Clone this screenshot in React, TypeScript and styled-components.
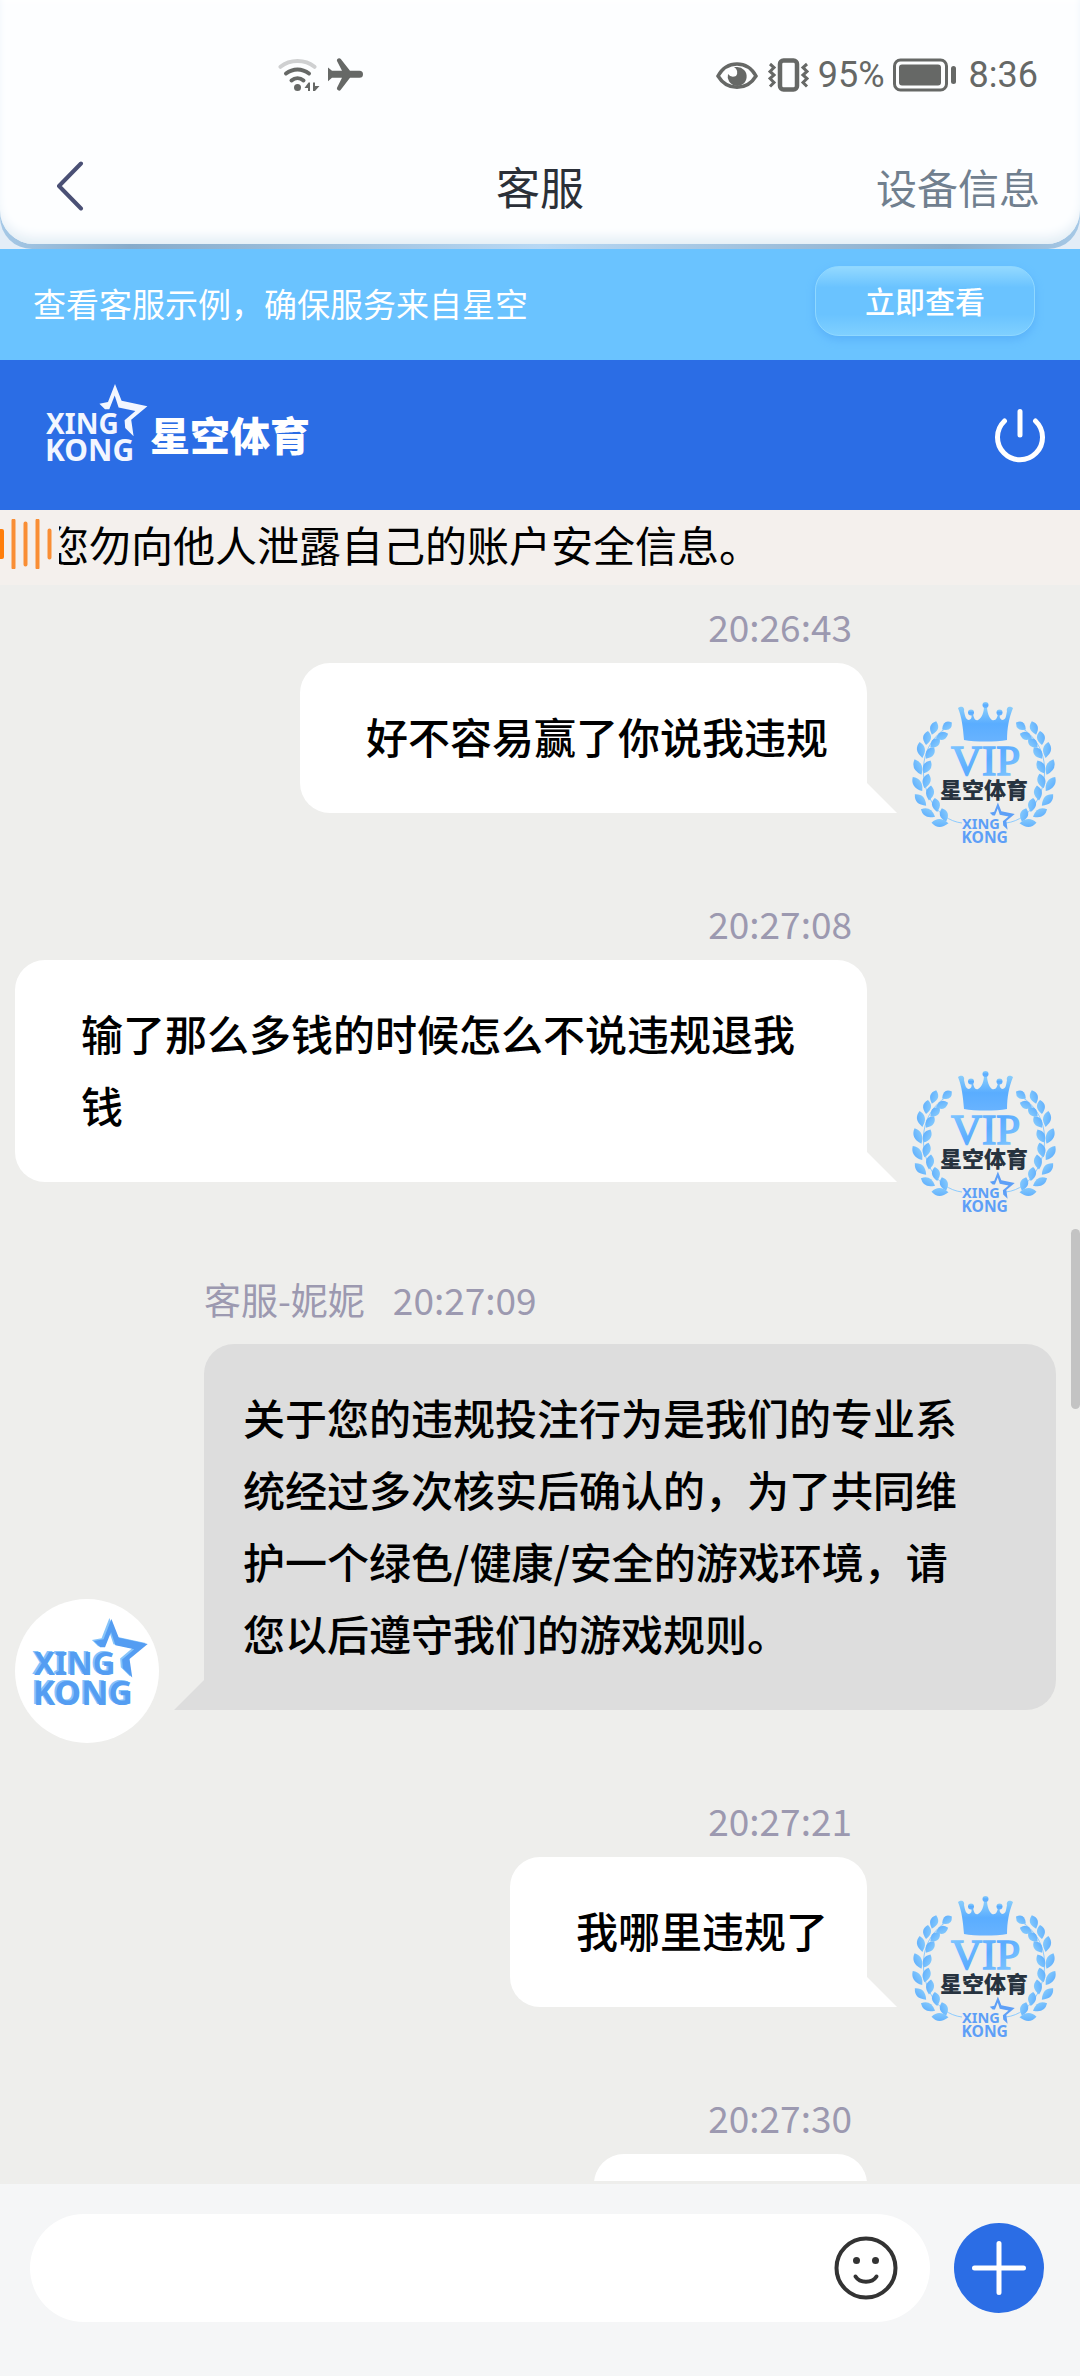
import React, { useState } from 'react';
import styled, { createGlobalStyle, css } from 'styled-components';

type Message = {
  id: number;
  from: 'user' | 'agent';
  name?: string;
  time: string;
  text: string;
};

const MESSAGES: Message[] = [
  { id: 1, from: 'user', time: '20:26:43', text: '好不容易赢了你说我违规' },
  { id: 2, from: 'user', time: '20:27:08', text: '输了那么多钱的时候怎么不说违规退我钱' },
  {
    id: 3,
    from: 'agent',
    name: '客服-妮妮',
    time: '20:27:09',
    text: '关于您的违规投注行为是我们的专业系统经过多次核实后确认的，为了共同维护一个绿色/健康/安全的游戏环境，请您以后遵守我们的游戏规则。',
  },
  { id: 4, from: 'user', time: '20:27:21', text: '我哪里违规了' },
  { id: 5, from: 'user', time: '20:27:30', text: '' },
];

// cx, cy, length, angle
const LEAVES = [
  [28, 121, 17, 2],
  [16, 111, 16, 28],
  [8.5, 98, 16, 45],
  [5.5, 82, 17, 56],
  [6, 65, 17, 66],
  [9, 48, 16, 80],
  [15, 36, 14, 98],
  [22, 26, 14, 108],
  [32, 113, 14, 72],
  [24, 103, 14, 80],
  [18, 91, 15, 98],
  [14.5, 79, 15, 106],
  [15, 65, 15, 118],
  [18, 51, 14, 126],
  [23, 41, 13, 136],
  [30, 34, 13, 160],
  [35, 24, 12, 144],
];

const STAR =
  'M70 0 76.6 16.8 102.4 22.3 86.2 35.7 88.6 52.2 80.2 44 79.6 36.2 90.4 27 73.6 23.5 69.7 11.6 64.3 25.2H60L54.4 19.7 63 18Z';

const BrandMark = ({ fill }: { fill: string }) => (
  <g fill={fill} fontFamily="'Noto Sans', sans-serif" fontWeight="700">
    <path d={STAR} />
    <text x="1" y="50" fontSize="28">
      XING
    </text>
    <text x="0" y="77" fontSize="30">
      KONG
    </text>
  </g>
);

const Laurel = () => (
  <>
    <path d="M50 121C24 118 8 88 12 60 14 46 22 34 34 26" fill="none" stroke="#8ccbff" strokeWidth="1" />
    {LEAVES.map(([x, y, size, angle]) => (
      <path
        key={`${x}-${y}`}
        transform={`translate(${x} ${y}) rotate(${angle})`}
        d={`M${-size / 2} 0Q-1 -8 ${size / 2} 0Q-1 8 ${-size / 2} 0Z`}
      />
    ))}
  </>
);

const VipAvatar = () => (
  <AvatarSvg viewBox="0 0 144 144" aria-hidden="true">
    <defs>
      <linearGradient id="leaf" x1="0" y1="0" x2="0" y2="1">
        <stop offset="0" stopColor="#82c8fd" />
        <stop offset="1" stopColor="#64b2fd" />
      </linearGradient>
      <linearGradient id="vip" x1="0" y1="0" x2="1" y2="1">
        <stop offset="0" stopColor="#86cbff" />
        <stop offset="0.5" stopColor="#5aabff" />
        <stop offset="1" stopColor="#8ccfff" />
      </linearGradient>
      <linearGradient id="crown" x1="0" y1="0" x2="0" y2="1">
        <stop offset="0" stopColor="#8ccffb" />
        <stop offset="0.5" stopColor="#5aadff" />
        <stop offset="1" stopColor="#68b3ff" />
      </linearGradient>
    </defs>
    <g fill="url(#leaf)">
      <Laurel />
      <g transform="translate(144 0) scale(-1 1)">
        <Laurel />
      </g>
    </g>
    <g fill="url(#crown)">
      <path d="M52 38C51 26 50 16 46 6 50 3 53 6 52 9 53 14 54 18 57 18 60 17 60 14 59 12H61C62 16 63 19 66 18 70 16 72 10 72 4H75C75 10 77 16 80 18 84 19 85 16 86 12H88C87 15 88 17 90 18 94 18 94 14 95 9 94 6 97 3 101 6 97 16 95 26 95 38 84 40 63 40 52 38Z" />
      <circle cx="73.500" cy="3" r="3" />
      <circle cx="59" cy="10.500" r="3" />
      <circle cx="87.500" cy="10.500" r="3" />
    </g>
    <text x="39" y="73" fontFamily="'Liberation Serif', serif" fontSize="43" fill="url(#vip)" stroke="url(#vip)" strokeWidth="1.500">
      VIP
    </text>
    <text x="28" y="96" fontFamily="'Noto Sans CJK SC', sans-serif" fontWeight="900" fontSize="22" fill="#27333f">
      星空体育
    </text>
    <g transform="translate(49.500 100.500) scale(0.520)">
      <BrandMark fill="#5d9ff7" />
    </g>
  </AvatarSvg>
);

const AgentAvatar = () => (
  <AvatarSvg viewBox="0 0 144 144" aria-hidden="true">
    <circle cx="72" cy="72" r="72" fill="#fff" />
    <g transform="translate(16 19) scale(1.120)">
      <BrandMark fill="#86c4fa" />
    </g>
    <g transform="translate(18 20) scale(1.120)">
      <BrandMark fill="#549df2" />
    </g>
  </AvatarSvg>
);

const App = () => {
  const [draft, setDraft] = useState('');

  return (
    <>
      <GlobalStyle />
      <Page>
        <HeaderShell>
          <HeaderRim>
            <HeaderCard>
              <StatusBar>
                <StatusGroup>
                  <svg width="42" height="34" viewBox="0 0 42 34" aria-hidden="true">
                    <g fill="none" strokeWidth="4" strokeLinecap="round">
                      <path d="M2.500 8.800C12 1 27 1 36.500 8.800" stroke="#cfd0d1" />
                      <path d="M8 15.500C15 10 24 10 31 15.500M13.500 22.500C17 19.500 22 19.500 25.500 22.500" stroke="#666866" />
                    </g>
                    <circle cx="19.500" cy="29.500" r="3.500" fill="#666866" />
                    <path d="M26.500 30 30.500 24.500H32V33H30V30ZM35 24.500H37V28H41.500L37 33H35Z" fill="#666866" />
                  </svg>
                  <svg width="36" height="34" viewBox="0 0 36 34" aria-hidden="true">
                    <path
                      d="M0 9.500 4 12.800H14L9 3A2.200 2.200 0 0 1 12.800 1L22 12.800H31.500A3.500 3.500 0 0 1 31.500 19.800H22L12.800 31.800A2.200 2.200 0 0 1 9 29.800L14 19.800H4L0 23.200Z"
                      fill="#666866"
                    />
                  </svg>
                </StatusGroup>
                <StatusGroup>
                  <svg width="42" height="34" viewBox="0 0 42 34" aria-hidden="true">
                    <path d="M2 18C11 2 31 2 40 18 31 33 11 33 2 18Z" fill="none" stroke="#666866" strokeWidth="3.500" />
                    <path d="M21 9A9.500 9.500 0 1 1 12 16 6.500 6.500 0 0 0 20 18 6 6 0 0 0 18 9Z" fill="#666866" />
                  </svg>
                  <VibrateIcon viewBox="0 0 42 34" aria-hidden="true">
                    <g fill="none" stroke="#666866">
                      <rect x="12" y="2.500" width="17" height="29" rx="3.500" strokeWidth="4.500" />
                      <path
                        d="M2 6 6 9.500 2 13.500 6 17 2 20.500 6 24.500 2 28.500M39 6 35 9.500 39 13.500 35 17 39 20.500 35 24.500 39 28.500"
                        strokeWidth="3"
                      />
                    </g>
                  </VibrateIcon>
                  <span>95%</span>
                  <svg width="64" height="34" viewBox="0 0 64 34" aria-hidden="true">
                    <rect x="1.500" y="2" width="52" height="30" rx="6" fill="none" stroke="#666866" strokeWidth="3" />
                    <rect x="6" y="6.500" width="42" height="21" rx="3" fill="#666866" />
                    <rect x="58" y="8" width="5" height="18" rx="2.500" fill="#666866" />
                  </svg>
                  <Clock>8:36</Clock>
                </StatusGroup>
              </StatusBar>
              <NavBar>
                <BackButton aria-label="返回">
                  <svg width="28" height="50" viewBox="0 0 28 50" aria-hidden="true">
                    <path d="M25 2.500 3 25 25 47.500" fill="none" stroke="#4a5075" strokeWidth="4" strokeLinecap="round" strokeLinejoin="round" />
                  </svg>
                </BackButton>
                <Title>客服</Title>
                <DeviceLink href="#device">设备信息</DeviceLink>
              </NavBar>
            </HeaderCard>
          </HeaderRim>
        </HeaderShell>

        <Banner>
          <span>查看客服示例，确保服务来自星空</span>
          <BannerButton>立即查看</BannerButton>
        </Banner>

        <BrandBar>
          <BrandLogo viewBox="0 0 280 90" role="img" aria-label="星空体育">
            <BrandMark fill="#f2f6ff" />
            <text x="105" y="67" fontFamily="'Noto Sans CJK SC', sans-serif" fontWeight="900" fontSize="40" fill="#fff">
              星空体育
            </text>
          </BrandLogo>
          <IconButton aria-label="结束会话">
            <svg width="52" height="56" viewBox="0 0 52 56" aria-hidden="true">
              <path d="M26 4.500V28M10.500 14A22.500 22.500 0 1 0 41.500 14" fill="none" stroke="#fff" strokeWidth="5" strokeLinecap="round" />
            </svg>
          </IconButton>
        </BrandBar>

        <Marquee>
          <svg width="52" height="50" viewBox="0 0 52 50" aria-hidden="true">
            <path d="M0 10H2A2 2 0 0 1 4 12V38A2 2 0 0 1 2 40H0Z" fill="#ff7e0b" />
            <path d="M13.500 1.500V48.500M25.500 4.500V45.500M37.500 1.500V48.500M49.500 11.500V38.500" stroke="#f98e35" strokeWidth="4" strokeLinecap="round" />
          </svg>
          <MarqueeTrack>
            <MarqueeText>您勿向他人泄露自己的账户安全信息。</MarqueeText>
          </MarqueeTrack>
        </Marquee>

        <Chat>
          <MessageList>
            {MESSAGES.map(({ id, from, name, time, text }) => (
              <Row key={id} $from={from}>
                <AvatarBox>{from === 'user' ? <VipAvatar /> : <AgentAvatar />}</AvatarBox>
                <Body $from={from}>
                  <Meta $from={from}>
                    {name && <span>{name}</span>}
                    <time>{time}</time>
                  </Meta>
                  <Bubble $from={from} $pending={!text}>
                    {text}
                  </Bubble>
                </Body>
              </Row>
            ))}
          </MessageList>
          <ScrollThumb />
        </Chat>

        <Composer>
          <Field>
            <TextInput aria-label="输入消息" value={draft} onChange={e => setDraft(e.target.value)} />
            <IconButton aria-label="表情">
              <svg width="64" height="64" viewBox="0 0 64 64" aria-hidden="true">
                <circle cx="32" cy="32" r="29.500" fill="none" stroke="#333" strokeWidth="4" />
                <circle cx="22.500" cy="24.500" r="3.500" fill="#333" />
                <circle cx="41.500" cy="24.500" r="3.500" fill="#333" />
                <path d="M21.500 40.500C26 47.500 38 47.500 42.500 40.500" fill="none" stroke="#333" strokeWidth="4" strokeLinecap="round" />
              </svg>
            </IconButton>
          </Field>
          <AddButton aria-label="更多">
            <svg width="54" height="54" viewBox="0 0 54 54" aria-hidden="true">
              <path d="M27 2.500V51.500M2.500 27H51.500" stroke="#fff" strokeWidth="5" strokeLinecap="round" />
            </svg>
          </AddButton>
        </Composer>
      </Page>
    </>
  );
};

const GlobalStyle = createGlobalStyle`
  * {
    box-sizing: border-box;
  }

  body {
    margin: 0;
    font-family: 'Noto Sans CJK SC', sans-serif;
  }

  button, input {
    padding: 0;
    border: 0;
    background: none;
    font: inherit;
  }

  svg {
    display: block;
    flex: none;
  }
`;

const Page = styled.div`
  display: flex;
  flex-direction: column;
  height: 100vh;
  background: #eeeeec;
`;

const HeaderShell = styled.header`
  flex: none;
  background: #e3edf7;
`;

const HeaderRim = styled.div`
  padding-bottom: 5px;
  border-radius: 0 0 32px 32px;
  background: linear-gradient(90deg, #a5c8e6, #86abca 12%, #b7d8f4 50%, #8badca 88%, #a5c8e6);
`;

const HeaderCard = styled.div`
  border-radius: 0 0 34px 34px;
  background: #fdfeff;
  box-shadow: inset 0 -10px 12px -4px #e2edf5, inset 0 6px 8px -4px #fff;
`;

const StatusBar = styled.div`
  display: flex;
  align-items: center;
  justify-content: space-between;
  height: 126px;
  padding: 24px 42px 0 278px;
  color: #666866;
  font-family: Roboto, sans-serif;
  font-size: 36px;
`;

const StatusGroup = styled.div`
  display: flex;
  align-items: center;
  gap: 8px;
`;

const VibrateIcon = styled.svg`
  width: 42px;
  height: 34px;
  margin-left: 2px;
`;

const Clock = styled.time`
  margin-left: 4px;
`;

const NavBar = styled.nav`
  display: grid;
  grid-template-columns: 1fr auto 1fr;
  align-items: center;
  height: 118px;
  padding: 2px 40px 0;
`;

const BackButton = styled.button`
  justify-self: start;
  margin-left: 16px;
`;

const Title = styled.h1`
  margin: 0;
  color: #2b3038;
  font-size: 44px;
  font-weight: 400;
`;

const DeviceLink = styled.a`
  justify-self: end;
  color: #71808f;
  font-size: 41px;
  text-decoration: none;
`;

const Banner = styled.div`
  display: flex;
  flex: none;
  align-items: center;
  justify-content: space-between;
  height: 111px;
  padding: 0 45px 3px 33px;
  background: #6ac3ff;
  color: #fff;
  font-size: 33px;
`;

const BannerButton = styled.button`
  width: 220px;
  height: 70px;
  margin-bottom: 5px;
  padding-bottom: 2px;
  border: 1px solid #8fd8ff;
  border-radius: 24px;
  background: linear-gradient(#93d9ff, #6ac3ff 30%, #6ac3ff 70%, #7fd0ff);
  box-shadow: 0 4px 8px #5ab2fa;
  color: #fff;
  font-size: 30px;
  font-weight: 500;
`;

const BrandBar = styled.div`
  display: flex;
  flex: none;
  align-items: center;
  justify-content: space-between;
  height: 150px;
  padding: 0 34px 0 45px;
  background: #2b6de5;
`;

const BrandLogo = styled.svg`
  width: 280px;
  height: 90px;
  margin-bottom: 12px;
  overflow: visible;
`;

const IconButton = styled.button`
  flex: none;
`;

const Marquee = styled.div`
  display: flex;
  flex: none;
  align-items: center;
  gap: 7px;
  height: 75px;
  padding-bottom: 8px;
  background: #f4f0ed;
`;

const MarqueeTrack = styled.div`
  flex: 1;
  overflow: hidden;
`;

const MarqueeText = styled.p`
  margin: 0 0 0 -12px;
  font-size: 42px;
  line-height: 64px;
  white-space: nowrap;
`;

const Chat = styled.main`
  position: relative;
  flex: 1;
  min-height: 0;
  margin-bottom: 3px;
  overflow: hidden;
`;

const MessageList = styled.div`
  display: flex;
  flex-direction: column;
  gap: 56px;
  padding: 20px 24px 0 15px;
`;

const Row = styled.section<{ $from: Message['from'] }>`
  display: flex;
  flex-direction: ${({ $from }) => ($from === 'user' ? 'row-reverse' : 'row')};
  align-items: flex-end;
  gap: 45px;
`;

const AvatarBox = styled.div`
  flex: none;
`;

const AvatarSvg = styled.svg`
  width: 144px;
  height: 144px;
  overflow: visible;
`;

const Body = styled.div<{ $from: Message['from'] }>`
  display: flex;
  flex-direction: column;
  align-items: ${({ $from }) => ($from === 'user' ? 'flex-end' : 'flex-start')};
  min-width: 0;
  padding-bottom: 33px;
`;

const Meta = styled.div<{ $from: Message['from'] }>`
  display: flex;
  gap: 28px;
  margin-bottom: 16px;
  padding-right: 15px;
  color: #9c99b0;
  font-size: 37px;
  line-height: ${({ $from }) => ($from === 'user' ? 42 : 57)}px;
`;

const Bubble = styled.div<{ $from: Message['from']; $pending: boolean }>`
  position: relative;
  min-height: 150px;
  ${({ $pending }) => $pending && 'width: 273px;'}
  font-size: 42px;
  font-weight: 500;
  line-height: 72px;

  &::after {
    content: '';
    position: absolute;
    bottom: 0;
    width: 30px;
    height: 30px;
    background: inherit;
  }

  ${({ $from }) =>
    $from === 'user'
      ? css`
          padding: 37px 39px 41px 66px;
          border-radius: 30px 30px 0 30px;
          background: #fff;

          &::after {
            left: 100%;
            clip-path: polygon(0 0, 100% 100%, 0 100%);
          }
        `
      : css`
          padding: 37px 78px 41px 39px;
          border-radius: 30px 30px 30px 0;
          background: #ddd;

          &::after {
            right: 100%;
            clip-path: polygon(100% 0, 100% 100%, 0 100%);
          }
        `}
`;

const ScrollThumb = styled.div`
  position: absolute;
  top: 644px;
  right: 0;
  width: 9px;
  height: 180px;
  border-radius: 5px;
  background: #c3c3c3;
`;

const Composer = styled.footer`
  display: flex;
  flex: none;
  align-items: center;
  gap: 24px;
  padding: 30px 36px 54px 30px;
  background: #f5f6f7;
`;

const Field = styled.div`
  display: flex;
  flex: 1;
  align-items: center;
  height: 108px;
  padding: 0 32px 0 40px;
  border-radius: 54px;
  background: #fff;
`;

const TextInput = styled.input`
  flex: 1;
  min-width: 0;
  height: 100%;
  font-size: 42px;
  outline: none;
`;

const AddButton = styled.button`
  display: grid;
  flex: none;
  place-items: center;
  width: 90px;
  height: 90px;
  border-radius: 50%;
  background: #2b6de5;
`;

export default App;
